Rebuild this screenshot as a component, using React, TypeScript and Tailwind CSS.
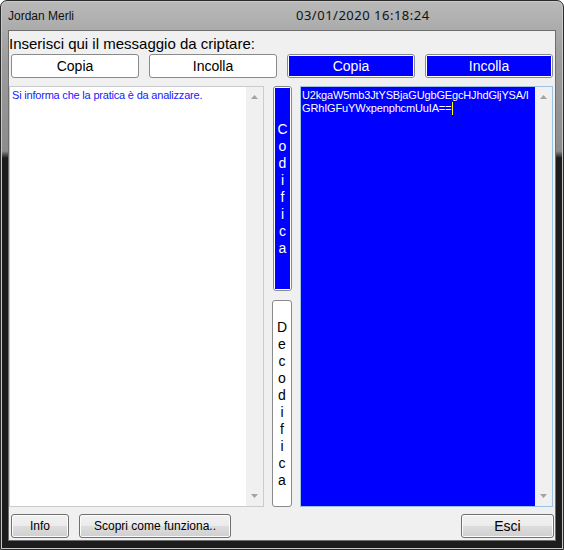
const sans = "font-['Liberation_Sans',Arial,sans-serif]"

function ScrollBar() {
  return (
    <div className="w-[17px] h-full bg-[#f0f0f0] flex flex-col justify-between items-center pt-[8px] pb-[8px]">
      <svg width="7" height="4" viewBox="0 0 7 4">
        <path d="M0 4 L3.5 0 L7 4 Z" fill="#a3a3a3" />
      </svg>
      <svg width="7" height="4" viewBox="0 0 7 4">
        <path d="M0 0 L3.5 4 L7 0 Z" fill="#a3a3a3" />
      </svg>
    </div>
  )
}

function FlatButton({ label, blue }: { label: string; blue?: boolean }) {
  return (
    <div className="w-[128px] h-[24px] rounded-[3px] border border-[#8a8a8a] p-px bg-white">
      <div
        className={
          blue
            ? "h-full w-full bg-[#0000ff] text-white text-[14px] flex items-center justify-center"
            : "h-full w-full bg-white text-black text-[14px] flex items-center justify-center"
        }
      >
        {label}
      </div>
    </div>
  )
}

function VerticalButton({ label, blue }: { label: string; blue?: boolean }) {
  return (
    <div
      className={
        blue
          ? "h-full w-[19px] rounded-[3px] border border-[#8a8a8a] p-px bg-white"
          : "h-full w-[20px] rounded-[3px] border border-[#8a8a8a] p-px bg-white"
      }
    >
      <div
        className={
          blue
            ? "h-full w-full bg-[#0000ff] text-white flex flex-col items-center justify-center text-[14px] leading-[17px]"
            : "h-full w-full bg-white text-black flex flex-col items-center justify-center text-[14px] leading-[17px]"
        }
      >
        {label.split("").map((c, i) => (
          <span key={i}>{c}</span>
        ))}
      </div>
    </div>
  )
}

function WinButton({ label, className }: { label: string; className: string }) {
  return (
    <div
      className={`${className} h-[24px] rounded-[3px] border border-[#707070] bg-[linear-gradient(to_bottom,#f2f2f2_0%,#ebebeb_50%,#dddddd_51%,#cfcfcf_100%)] shadow-[inset_0_0_0_1px_#fcfcfc] flex items-center justify-center text-black`}
    >
      {label}
    </div>
  )
}

export default function App() {
  const encoded = ["U2kgaW5mb3JtYSBjaGUgbGEgcHJhdGljYSA/I", "GRhIGFuYWxpenphcmUuIA=="]

  return (
    <div className={`w-[564px] h-[550px] bg-white ${sans}`}>
      <div className="w-full h-full rounded-t-[7px] border border-[#2a2a2a] bg-[linear-gradient(to_bottom,#b9b9b9_0px,#9c9c9c_60px,#8c8c8c_150px,#1c1c1c_157px,#1c1c1c_100%)] shadow-[inset_0_0_0_1px_#c8c8c8] flex flex-col">
        {/* title bar */}
        <div className="h-[29px] flex items-center pl-[7px] pt-[1px] text-[12px] text-[#111]">
          <span className="w-[288px]">Jordan Merli</span>
          <span className="font-['Noto_Sans',sans-serif] text-[13px] tracking-[0.5px]">03/01/2020 16:18:24</span>
        </div>

        {/* client area */}
        <div className="mx-[7px] h-[511px] border border-[#6e6e6e] bg-[#f0f0f0] flex flex-col">
          <div className="h-[23px] flex items-center text-[15px] text-black leading-none pt-[1px]">
            Inserisci qui il messaggio da criptare:
          </div>

          <div className="flex gap-[10px] pl-[2px]">
            <FlatButton label="Copia" />
            <FlatButton label="Incolla" />
            <FlatButton label="Copia" blue />
            <FlatButton label="Incolla" blue />
          </div>

          <div className="flex h-[421px] mt-[8px]">
            {/* input box */}
            <div className="w-[255px] h-full border border-[#c9cbd1] bg-white flex">
              <div className="flex-1 pl-[2px] pt-[2px] text-[11px] leading-[13px] tracking-[-0.2px] text-[#2020ff]">
                Si informa che la pratica è da analizzare.
              </div>
              <ScrollBar />
            </div>

            {/* middle buttons */}
            <div className="w-[36px] h-full flex flex-col items-center gap-[9px]">
              <div className="h-[205px] pl-[1px]">
                <VerticalButton label="Codifica" blue />
              </div>
              <div className="flex-1">
                <VerticalButton label="Decodifica" />
              </div>
            </div>

            {/* output box */}
            <div className="w-[253px] h-full border border-[#9ec3e2] bg-white flex">
              <div className="flex-1 bg-[#0000ff] pl-[1px] pt-[2px] text-[11px] leading-[13px] tracking-[-0.15px] text-white">
                <div>{encoded[0]}</div>
                <div className="flex items-center">
                  {encoded[1]}
                  <span className="inline-block w-px h-[13px] bg-[#ffff00] ml-px" />
                </div>
              </div>
              <ScrollBar />
            </div>
          </div>

          <div className="flex mt-[7px] pl-[2px] pr-[1px]">
            <WinButton label="Info" className="w-[58px] text-[12px]" />
            <div className="w-[10px]" />
            <WinButton label="Scopri come funziona.." className="w-[152px] text-[12px]" />
            <div className="flex-1" />
            <WinButton label="Esci" className="w-[93px] text-[14px]" />
          </div>
        </div>
      </div>
    </div>
  )
}
